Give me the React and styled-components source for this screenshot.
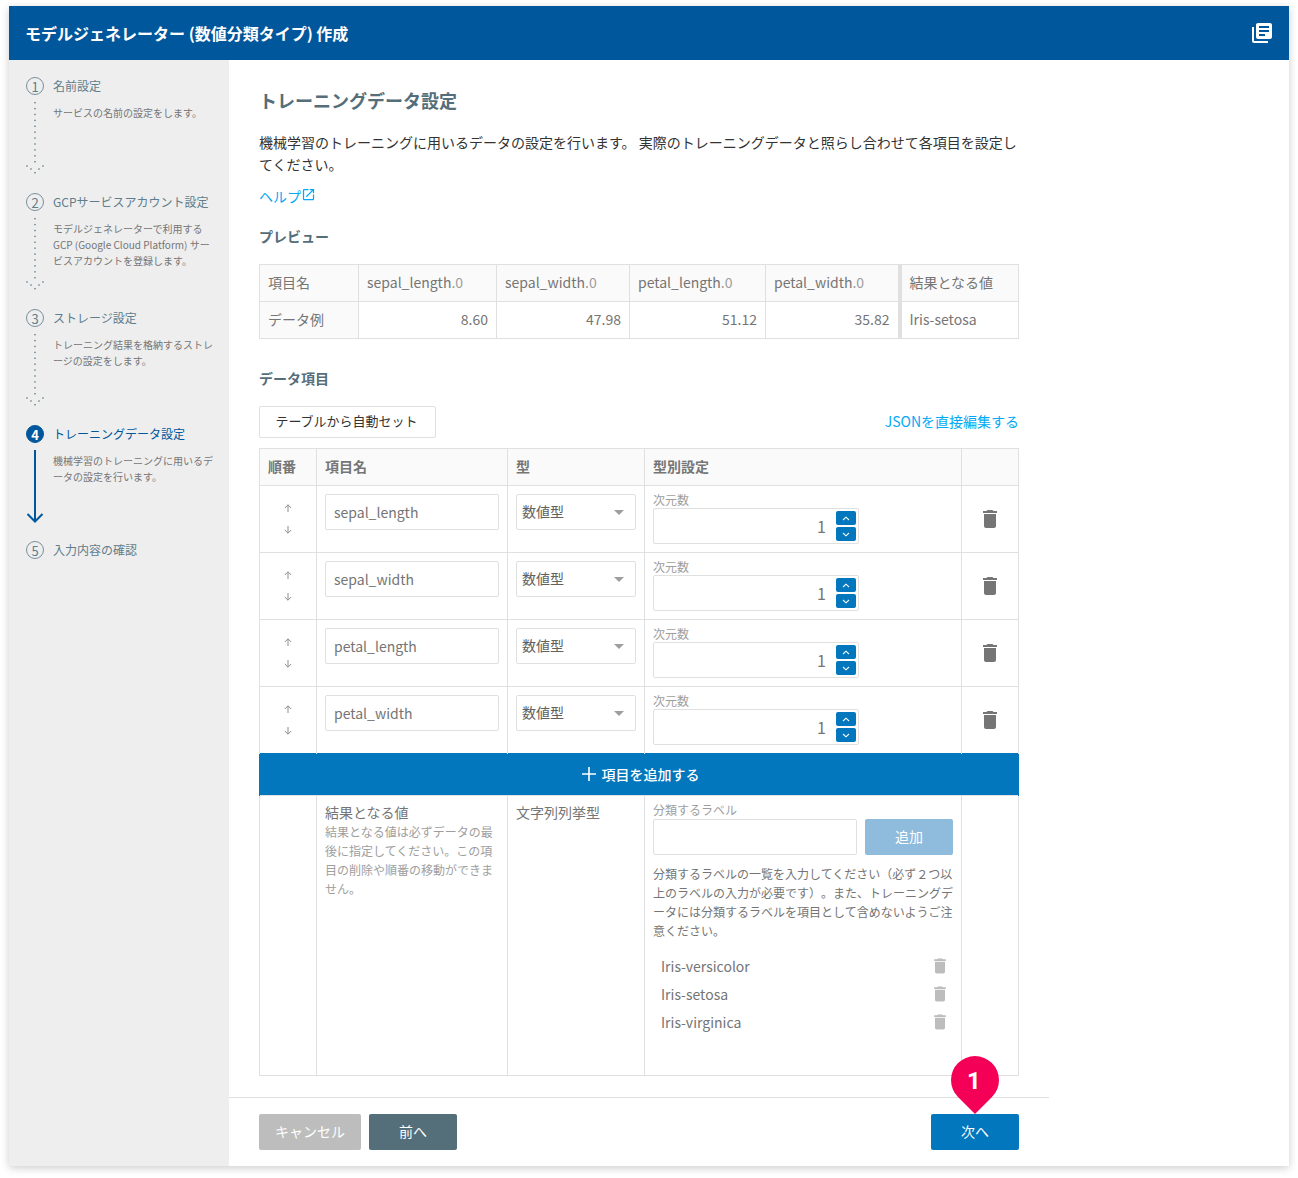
import React from 'react';
import styled, {createGlobalStyle} from 'styled-components';
import {MdDelete, MdLibraryBooks, MdOpenInNew} from 'react-icons/md';

const steps = [
    {no: 1, label: '名前設定', desc: 'サービスの名前の設定をします。'},
    {no: 2, label: 'GCPサービスアカウント設定', desc: 'モデルジェネレーターで利用するGCP (Google Cloud Platform) サービスアカウントを登録します。'},
    {no: 3, label: 'ストレージ設定', desc: 'トレーニング結果を格納するストレージの設定をします。'},
    {no: 4, label: 'トレーニングデータ設定', desc: '機械学習のトレーニングに用いるデータの設定を行います。', active: true},
    {no: 5, label: '入力内容の確認', last: true},
];

const preview = [
    {name: 'sepal_length', value: '8.60'},
    {name: 'sepal_width', value: '47.98'},
    {name: 'petal_length', value: '51.12'},
    {name: 'petal_width', value: '35.82'},
];

const labels = ['Iris-versicolor', 'Iris-setosa', 'Iris-virginica'];

const DottedArrow = () => (
    <Connector width="18" height="80" viewBox="0 0 18 80">
        {Array.from({length: 11}).map((_, i) => (
            <rect key={i} x="8.3" y={7 + i * 5.9} width="1.4" height="1.4" fill="#607d8b"/>
        ))}
        <rect x="0.3" y="70.3" width="1.4" height="1.4" fill="#607d8b"/>
        <rect x="4.3" y="73.3" width="1.4" height="1.4" fill="#607d8b"/>
        <rect x="8.3" y="77" width="1.4" height="1.4" fill="#607d8b"/>
        <rect x="12.3" y="73.3" width="1.4" height="1.4" fill="#607d8b"/>
        <rect x="16.3" y="70.3" width="1.4" height="1.4" fill="#607d8b"/>
    </Connector>
);

const SolidArrow = () => (
    <Connector width="18" height="80" viewBox="0 0 18 80">
        <path d="M9 7V78M1.5 71L9 78.5L16.5 71" fill="none" stroke="#01579b" strokeWidth="2"/>
    </Connector>
);

const Chevron = ({up}) => (
    <svg width="8" height="5" viewBox="0 0 8 5">
        <path d={up ? 'M1 4L4 1.2L7 4' : 'M1 1L4 3.8L7 1'} fill="none" stroke="#fff" strokeWidth="1.1"/>
    </svg>
);

const SmallArrow = ({up}) => (
    <svg width="8" height="8" viewBox="0 0 8 8">
        <path d={up ? 'M4 8V.8M.8 4L4 .8L7.2 4' : 'M4 0V7.2M.8 4L4 7.2L7.2 4'} fill="none" stroke="#8e8e8e" strokeWidth="1"/>
    </svg>
);

const Sidebar = () => (
    <Side>
        {steps.map(step => (
            <Step key={step.no}>
                <StepRail>
                    <StepNo $active={step.active}>{step.no}</StepNo>
                    {!step.last && (step.active ? <SolidArrow/> : <DottedArrow/>)}
                </StepRail>
                <div>
                    <StepLabel $active={step.active}>{step.label}</StepLabel>
                    {step.desc && <StepDesc>{step.desc}</StepDesc>}
                </div>
            </Step>
        ))}
    </Side>
);

const PreviewTable = () => (
    <Grid>
        <colgroup>
            <col width="99"/>
            <col width="138"/>
            <col width="133"/>
            <col width="136"/>
            <col width="134"/>
            <col width="119"/>
        </colgroup>
        <tbody>
            <tr>
                <HeadCell>項目名</HeadCell>
                {preview.map(item => (
                    <HeadCell key={item.name}>{item.name}<Suffix>.0</Suffix></HeadCell>
                ))}
                <HeadCell $result>結果となる値</HeadCell>
            </tr>
            <tr>
                <HeadCell>データ例</HeadCell>
                {preview.map(item => (
                    <ValueCell key={item.name}>{item.value}</ValueCell>
                ))}
                <ValueCell $result>Iris-setosa</ValueCell>
            </tr>
        </tbody>
    </Grid>
);

const ItemRow = ({name}) => (
    <tr>
        <OrderCell>
            <OrderArrows>
                <SmallArrow up/>
                <SmallArrow/>
            </OrderArrows>
        </OrderCell>
        <Cell><TextInput defaultValue={name}/></Cell>
        <Cell>
            <SelectBox>
                <select defaultValue="number">
                    <option value="number">数値型</option>
                </select>
            </SelectBox>
        </Cell>
        <ConfigCell>
            <FieldLabel>次元数</FieldLabel>
            <NumberBox>
                <NumberInput defaultValue="1" readOnly/>
                <Spinner>
                    <SpinButton><Chevron up/></SpinButton>
                    <SpinButton><Chevron/></SpinButton>
                </Spinner>
            </NumberBox>
        </ConfigCell>
        <TrashCell><MdDelete size={24}/></TrashCell>
    </tr>
);

const ItemTable = () => (
    <ItemGrid>
        <colgroup>
            <col width="57"/>
            <col width="191"/>
            <col width="137"/>
            <col width="317"/>
            <col width="57"/>
        </colgroup>
        <thead>
            <tr>
                <ColHead>順番</ColHead>
                <ColHead>項目名</ColHead>
                <ColHead>型</ColHead>
                <ColHead>型別設定</ColHead>
                <ColHead/>
            </tr>
        </thead>
        <tbody>
            {preview.map(item => <ItemRow key={item.name} name={item.name}/>)}
            <tr>
                <AddCell colSpan={5}>
                    <AddButton>
                        <svg width="14" height="14" viewBox="0 0 14 14">
                            <path d="M7 0V14M0 7H14" stroke="#fff" strokeWidth="1.6"/>
                        </svg>
                        項目を追加する
                    </AddButton>
                </AddCell>
            </tr>
            <tr>
                <ResultCell/>
                <ResultCell>
                    <ResultName>結果となる値</ResultName>
                    <ResultNote>結果となる値は必ずデータの最後に指定してください。この項目の削除や順番の移動ができません。</ResultNote>
                </ResultCell>
                <ResultCell><ResultName>文字列列挙型</ResultName></ResultCell>
                <LabelCell>
                    <FieldLabel>分類するラベル</FieldLabel>
                    <LabelForm>
                        <LabelInput/>
                        <AddLabelButton>追加</AddLabelButton>
                    </LabelForm>
                    <LabelNote>分類するラベルの一覧を入力してください（必ず２つ以上のラベルの入力が必要です）。また、トレーニングデータには分類するラベルを項目として含めないようご注意ください。</LabelNote>
                    <LabelList>
                        {labels.map(label => (
                            <LabelRow key={label}>
                                {label}
                                <MdDelete size={20}/>
                            </LabelRow>
                        ))}
                    </LabelList>
                </LabelCell>
                <ResultCell/>
            </tr>
        </tbody>
    </ItemGrid>
);

const App = () => (
    <>
        <GlobalStyle/>
        <Window>
            <Header>
                <Title>モデルジェネレーター (数値分類タイプ) 作成</Title>
                <MdLibraryBooks size={24}/>
            </Header>
            <Body>
                <Sidebar/>
                <Main>
                    <Content>
                        <Heading>トレーニングデータ設定</Heading>
                        <Lead>機械学習のトレーニングに用いるデータの設定を行います。 実際のトレーニングデータと照らし合わせて各項目を設定してください。</Lead>
                        <Help>ヘルプ<MdOpenInNew size={15}/></Help>
                        <Section>プレビュー</Section>
                        <PreviewTable/>
                        <ItemSection>データ項目</ItemSection>
                        <Toolbar>
                            <AutoButton>テーブルから自動セット</AutoButton>
                            <JsonLink>JSONを直接編集する</JsonLink>
                        </Toolbar>
                        <ItemTable/>
                    </Content>
                    <Footer>
                        <FootButton $kind="cancel" $width={102}>キャンセル</FootButton>
                        <FootButton $kind="back" $width={88}>前へ</FootButton>
                        <NextWrap>
                            <Pin>
                                <svg width="48" height="58" viewBox="0 0 48 58">
                                    <path d="M24 58L7 41A24 24 0 1 1 41 41Z" fill="#f50057"/>
                                </svg>
                                <PinNo>1</PinNo>
                            </Pin>
                            <FootButton $kind="next" $width={88}>次へ</FootButton>
                        </NextWrap>
                    </Footer>
                </Main>
            </Body>
        </Window>
    </>
);

const GlobalStyle = createGlobalStyle`
  html, body {
    margin: 0;
    background: #fff;
  }

  body {
    font-family: "Noto Sans CJK JP", "Noto Sans", sans-serif;
    font-size: 14px;
    color: #333;
    text-spacing-trim: space-all;
  }

  input, select, button {
    font-family: inherit;
  }
`;

const Window = styled.div`
  width: 1280px;
  height: 1160px;
  margin: 6px 0 12px 9px;
  display: flex;
  flex-direction: column;
  background: #fff;
  box-shadow: 0 2px 8px rgba(0, 0, 0, .2);
`;

const Header = styled.header`
  height: 54px;
  flex: none;
  display: flex;
  align-items: center;
  justify-content: space-between;
  padding: 0 15px 0 16px;
  background: #01579b;
  color: #fff;
`;

const Title = styled.h1`
  margin: 0;
  font-size: 16px;
  font-weight: 700;
`;

const Body = styled.div`
  flex: 1;
  display: flex;
  min-height: 0;
`;

const Side = styled.nav`
  width: 220px;
  flex: none;
  box-sizing: border-box;
  padding: 17px 16px 0 17px;
  background: #eee;
`;

const Step = styled.div`
  height: 116px;
  display: grid;
  grid-template-columns: 18px 1fr;
  column-gap: 9px;
`;

const StepRail = styled.div`
  display: flex;
  flex-direction: column;
`;

const StepNo = styled.div`
  width: 18px;
  height: 18px;
  box-sizing: border-box;
  display: flex;
  align-items: center;
  justify-content: center;
  border-radius: 50%;
  border: 1px solid ${p => p.$active ? '#01579b' : '#78909c'};
  background: ${p => p.$active ? '#01579b' : 'transparent'};
  color: ${p => p.$active ? '#fff' : '#607d8b'};
  font-size: 13px;
  font-weight: ${p => p.$active ? 700 : 400};
  line-height: 1;
`;

const Connector = styled.svg`
  display: block;
  flex: none;
`;

const StepLabel = styled.div`
  font-size: 12px;
  line-height: 18px;
  color: ${p => p.$active ? '#01579b' : '#607d8b'};
`;

const StepDesc = styled.p`
  margin: 10px 0 0;
  font-size: 10px;
  line-height: 16px;
  color: #757575;
`;

const Main = styled.main`
  flex: 1;
  display: flex;
  flex-direction: column;
  min-width: 0;
`;

const Content = styled.div`
  width: 760px;
  padding: 28px 0 0 30px;
`;

const Heading = styled.h2`
  margin: 0;
  font-size: 18px;
  line-height: 24px;
  font-weight: 700;
  color: #546e7a;
`;

const Lead = styled.p`
  margin: 19px 0 0;
  line-height: 22px;
  color: #333;
`;

const Help = styled.a`
  display: flex;
  align-items: flex-start;
  margin-top: 10px;
  height: 22px;
  line-height: 22px;
  color: #03a9f4;

  svg {
    margin-top: 2px;
  }
`;

const Section = styled.h3`
  margin: 19px 0 18px;
  font-size: 14px;
  line-height: 20px;
  font-weight: 700;
  color: #546e7a;
`;

const ItemSection = styled(Section)`
  margin-top: 29px;
  margin-bottom: 18px;
`;

const Grid = styled.table`
  width: 759px;
  table-layout: fixed;
  border-collapse: collapse;
  border: 1px solid #e0e0e0;
`;

const HeadCell = styled.td`
  height: 37px;
  padding: 0 8px 2px;
  box-sizing: border-box;
  border: 1px solid #e0e0e0;
  border-left: ${p => p.$result ? '4px' : '1px'} solid #e0e0e0;
  background: #fafafa;
  color: #757575;
  white-space: nowrap;
`;

const Suffix = styled.span`
  color: #9e9e9e;
`;

const ValueCell = styled.td`
  height: 37px;
  padding: 0 8px 2px;
  box-sizing: border-box;
  border: 1px solid #e0e0e0;
  border-left: ${p => p.$result ? '4px' : '1px'} solid #e0e0e0;
  color: #757575;
  text-align: ${p => p.$result ? 'left' : 'right'};
`;

const Toolbar = styled.div`
  display: flex;
  align-items: center;
  justify-content: space-between;
  margin-bottom: 10px;
`;

const AutoButton = styled.button`
  width: 177px;
  height: 32px;
  padding: 0 2px 3px 0;
  border: 1px solid #e0e0e0;
  border-radius: 2px;
  background: #fff;
  color: #333;
  font-size: 13px;
`;

const JsonLink = styled.a`
  margin-bottom: 2px;
  color: #03a9f4;
`;

const ItemGrid = styled(Grid)`
  tbody tr:nth-child(4) td {
    border-bottom: none;
  }
`;

const ColHead = styled.th`
  height: 37px;
  padding: 0 8px 2px;
  box-sizing: border-box;
  border: 1px solid #e0e0e0;
  background: #fafafa;
  color: #757575;
  font-size: 14px;
  font-weight: 700;
  text-align: left;
`;

const Cell = styled.td`
  height: 67px;
  padding: 8px;
  box-sizing: border-box;
  border: 1px solid #e0e0e0;
  vertical-align: top;
`;

const OrderCell = styled(Cell)`
  padding: 18px 0 0;
`;

const OrderArrows = styled.div`
  display: flex;
  flex-direction: column;
  align-items: center;
  gap: 14px;

  svg {
    display: block;
  }
`;

const TextInput = styled.input`
  display: block;
  width: 100%;
  height: 36px;
  box-sizing: border-box;
  padding: 0 8px;
  border: 1px solid #e0e0e0;
  border-radius: 2px;
  color: #757575;
  font-size: 14px;
  outline: none;
`;

const SelectBox = styled.div`
  position: relative;
  height: 36px;

  select {
    width: 100%;
    height: 100%;
    box-sizing: border-box;
    padding: 0 5px 2px;
    border: 1px solid #e0e0e0;
    border-radius: 2px;
    background: #fff;
    color: #616161;
    font-size: 14px;
    appearance: none;
    outline: none;
  }

  &::after {
    content: '';
    position: absolute;
    top: 16px;
    right: 12px;
    border-style: solid;
    border-width: 5px 5px 0;
    border-color: #9e9e9e transparent transparent;
    pointer-events: none;
  }
`;

const ConfigCell = styled(Cell)`
  padding: 6px 8px 0;
`;

const FieldLabel = styled.div`
  font-size: 12px;
  line-height: 16px;
  color: #9e9e9e;
`;

const NumberBox = styled.div`
  width: 206px;
  height: 36px;
  box-sizing: border-box;
  display: flex;
  align-items: center;
  padding-right: 2px;
  border: 1px solid #e0e0e0;
  border-radius: 2px;
`;

const NumberInput = styled.input`
  flex: 1;
  min-width: 0;
  padding: 0 10px 0 0;
  border: 0;
  color: #757575;
  font-size: 16px;
  text-align: right;
  outline: none;
`;

const Spinner = styled.div`
  display: flex;
  flex-direction: column;
  gap: 2px;
`;

const SpinButton = styled.button`
  width: 20px;
  height: 14px;
  padding: 0;
  display: flex;
  align-items: center;
  justify-content: center;
  border: 0;
  border-radius: 2px;
  background: #0277bd;
`;

const TrashCell = styled.td`
  padding: 0;
  border: 1px solid #e0e0e0;
  color: #757575;
  text-align: center;
  vertical-align: middle;

  svg {
    display: block;
    margin: 0 auto;
  }
`;

const AddCell = styled.td`
  padding: 0;
  border: 1px solid #0277bd;
  border-bottom: none;
`;

const AddButton = styled.button`
  display: flex;
  width: 100%;
  height: 41px;
  align-items: center;
  justify-content: center;
  gap: 6px;
  padding: 0 0 2px 3px;
  border: 0;
  background: #0277bd;
  color: #fff;
  font-size: 14px;
  font-weight: 500;
`;

const ResultCell = styled.td`
  height: 280px;
  padding: 6px 8px 8px;
  box-sizing: border-box;
  border: 1px solid #e0e0e0;
  vertical-align: top;
`;

const ResultName = styled.div`
  color: #757575;
  line-height: 20px;
`;

const ResultNote = styled.div`
  font-size: 12px;
  line-height: 19px;
  color: #9e9e9e;
`;

const LabelCell = styled(ResultCell)`
  padding-top: 6px;
`;

const LabelForm = styled.div`
  display: flex;
  gap: 8px;
  margin-top: 1px;
`;

const LabelInput = styled.input`
  width: 204px;
  height: 36px;
  box-sizing: border-box;
  border: 1px solid #e0e0e0;
  border-radius: 2px;
  outline: none;
`;

const AddLabelButton = styled.button`
  flex: 1;
  height: 36px;
  padding: 0 0 2px;
  border: 0;
  border-radius: 2px;
  background: #8fbbdd;
  color: #fff;
  font-size: 14px;
`;

const LabelNote = styled.p`
  margin: 9px 0 0;
  font-size: 12px;
  line-height: 19px;
  color: #757575;
`;

const LabelList = styled.ul`
  margin: 12px 0 0;
  padding: 0 0 0 8px;
  list-style: none;
`;

const LabelRow = styled.li`
  height: 28px;
  display: flex;
  align-items: center;
  justify-content: space-between;
  color: #757575;

  svg {
    margin-right: 3px;
    color: #bdbdbd;
  }
`;

const Footer = styled.footer`
  width: 820px;
  height: 69px;
  margin-top: auto;
  box-sizing: border-box;
  display: flex;
  gap: 8px;
  padding: 16px 30px;
  border-top: 1px solid #e0e0e0;
`;

const footColors = {cancel: '#bdbdbd', back: '#546e7a', next: '#0277bd'};

const FootButton = styled.button`
  width: ${p => p.$width}px;
  height: 36px;
  padding: 0 0 2px;
  border: 0;
  border-radius: 2px;
  background: ${p => footColors[p.$kind]};
  color: #fff;
  font-size: 14px;
`;

const NextWrap = styled.div`
  position: relative;
  margin-left: auto;
`;

const Pin = styled.div`
  position: absolute;
  left: 20px;
  bottom: 36px;
  width: 48px;
  height: 58px;

  svg {
    display: block;
  }
`;

const PinNo = styled.span`
  position: absolute;
  top: 7px;
  left: 0;
  right: 2px;
  color: #fff;
  font-family: Roboto, sans-serif;
  font-size: 24px;
  line-height: 36px;
  font-weight: 700;
  text-align: center;
`;

export default App;
